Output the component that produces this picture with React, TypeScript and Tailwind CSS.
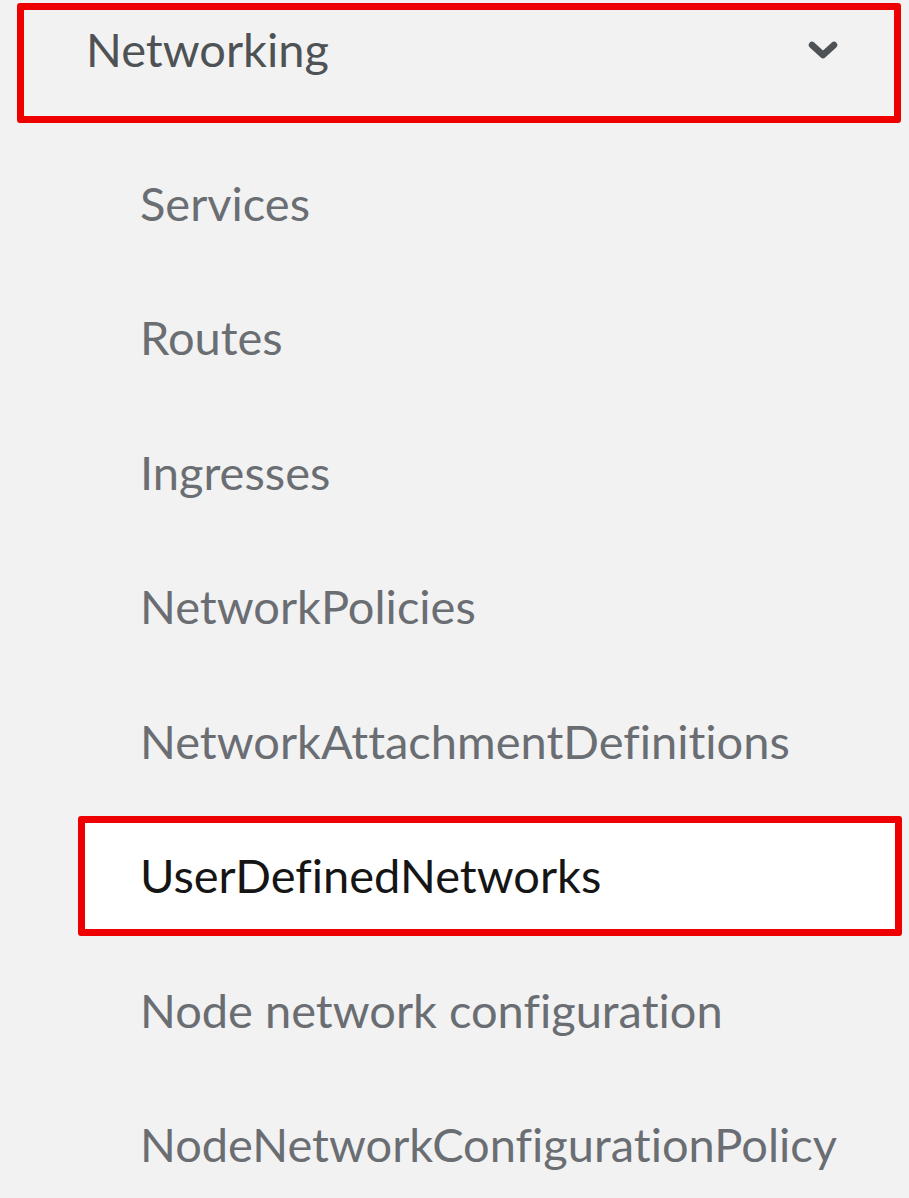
const items = [
  'Services',
  'Routes',
  'Ingresses',
  'NetworkPolicies',
  'NetworkAttachmentDefinitions',
  'UserDefinedNetworks',
  'Node network configuration',
  'NodeNetworkConfigurationPolicy',
];

const selected = 'UserDefinedNetworks';

function AngleDown() {
  return (
    <svg width="32" height="20" viewBox="0 0 32 20" fill="none" aria-hidden="true">
      <polyline
        points="5,4 16,14 27,4"
        stroke="#4f5255"
        strokeWidth="6.5"
        strokeLinecap="round"
        strokeLinejoin="round"
      />
    </svg>
  );
}

export default function App() {
  return (
    <main
      className="min-h-[1198px] w-[909px] bg-[#f2f2f2] pt-[3px] overflow-hidden [font-variant-ligatures:none]"
      style={{ fontFamily: 'Lato, "Open Sans", sans-serif' }}
    >
      {/* section toggle */}
      <button className="ml-[17px] w-[884px] h-[120px] border-[7px] border-[#ee0000] rounded-[3px] flex items-center justify-between pl-[62px] pr-[55px] pb-[28px]">
        <span className="text-[47px] text-[#4f5255] leading-none">Networking</span>
        <span className="mt-[4px]">
          <AngleDown />
        </span>
      </button>

      <ul className="mt-[20px] flex flex-col gap-[14.5px]">
        {items.map((name) => {
          const active = name === selected;
          return (
            <li
              key={name}
              className={`ml-[78px] w-[824px] h-[120px] flex items-center pl-[55px] rounded-[3px] border-[7px] ${
                active ? 'bg-white border-[#ee0000] text-[#151515]' : 'border-transparent text-[#6a6e73]'
              }`}
            >
              <span className="text-[47px] leading-none">{name}</span>
            </li>
          );
        })}
      </ul>
    </main>
  );
}
